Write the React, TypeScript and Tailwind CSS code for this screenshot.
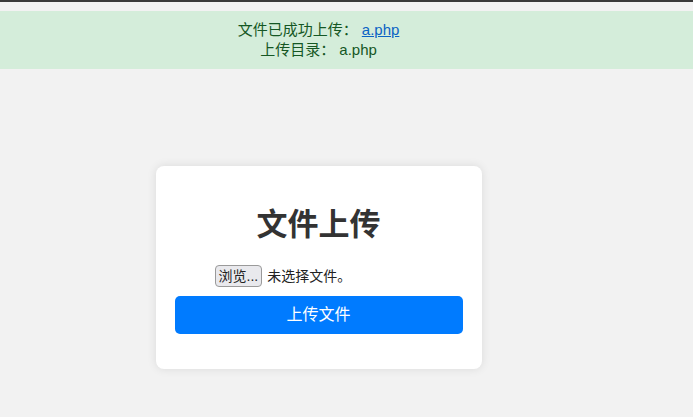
import React from "react";

const font = { fontFamily: '"Liberation Sans", "Noto Sans CJK SC", sans-serif' };

export default function App() {
  return (
    <div className="min-h-[417px] w-full bg-[#f2f2f2] text-[#333]" style={font}>
      {/* top window edge */}
      <div className="h-[2px] bg-[#3a3a3a]" />

      {/* ── Success notice ── */}
      <div className="mt-[9px] bg-[#d4edda] py-[9px]">
        <div className="w-[637px] text-center text-[15px] leading-[20px] text-[#155724]">
          <p>
            文件已成功上传：&nbsp;
            <a href="#" className="text-[#0b63c4] underline">a.php</a>
          </p>
          <p>上传目录：&nbsp;a.php</p>
        </div>
      </div>

      {/* ── Upload card ── */}
      <div className="flex w-[637px] justify-center pt-[97px]">
        <div className="w-[326px] rounded-lg bg-white px-[19px] pt-[39px] pb-[35px] shadow-[0_0_10px_rgba(0,0,0,0.1)]">
          <h1 className="text-center text-[31px] font-bold leading-[40px] text-[#333]">文件上传</h1>

          <div className="mt-[20px] flex h-[22px] items-center pl-[40px] text-[14px] text-[#222]">
            <span className="h-[22px] rounded-[4px] border border-[#9a9a9a] bg-[#e9e9ed] px-[3px] leading-[20px]">
              浏览...
            </span>
            <span className="ml-[5px]">未选择文件。</span>
          </div>

          <button className="mt-[9px] h-[38px] w-full rounded-[5px] bg-[#007bff] text-[16px] text-white">
            上传文件
          </button>
        </div>
      </div>
    </div>
  );
}
